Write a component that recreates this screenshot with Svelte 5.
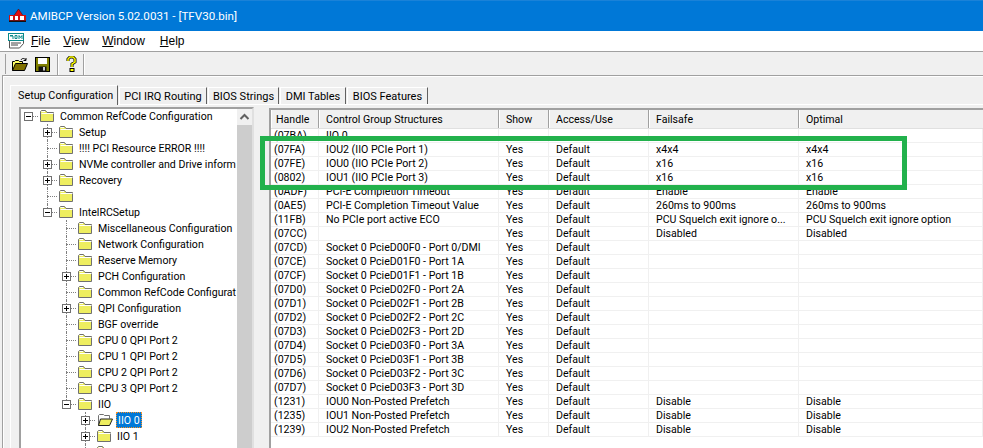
<script>
    const tabs = [
        { name: "Setup Configuration", w: 108 },
        { name: "PCI IRQ Routing", w: 88 },
        { name: "BIOS Strings", w: 71 },
        { name: "DMI Tables", w: 66 },
        { name: "BIOS Features", w: 81 }
    ];

    // l = level, x = expander, last = last child so the line stops half way
    const tree = [
        { l: 0, t: "Common RefCode Configuration", x: "-" },
        { l: 1, t: "Setup", x: "+" },
        { l: 1, t: "!!!! PCI Resource ERROR !!!!" },
        { l: 1, t: "NVMe controller and Drive inform", x: "+" },
        { l: 1, t: "Recovery", x: "+" },
        { l: 1, t: "" },
        { l: 1, t: "IntelRCSetup", x: "-", last: true },
        { l: 2, t: "Miscellaneous Configuration" },
        { l: 2, t: "Network Configuration" },
        { l: 2, t: "Reserve Memory" },
        { l: 2, t: "PCH Configuration", x: "+" },
        { l: 2, t: "Common RefCode Configurat" },
        { l: 2, t: "QPI Configuration", x: "+" },
        { l: 2, t: "BGF override" },
        { l: 2, t: "CPU 0 QPI Port 2" },
        { l: 2, t: "CPU 1 QPI Port 2" },
        { l: 2, t: "CPU 2 QPI Port 2" },
        { l: 2, t: "CPU 3 QPI Port 2" },
        { l: 2, t: "IIO", x: "-", last: true },
        { l: 3, t: "IIO 0", x: "+", open: true },
        { l: 3, t: "IIO 1", x: "+" },
        { l: 3, t: "IIO 2", x: "+" }
    ];

    const columns = ["Handle", "Control Group Structures", "Show", "Access/Use", "Failsafe", "Optimal"];

    const rows = [
        ["(07BA)", "IIO 0", "", "", "", ""],
        ["(07FA)", "IOU2 (IIO PCIe Port 1)", "Yes", "Default", "x4x4", "x4x4"],
        ["(07FE)", "IOU0 (IIO PCIe Port 2)", "Yes", "Default", "x16", "x16"],
        ["(0802)", "IOU1 (IIO PCIe Port 3)", "Yes", "Default", "x16", "x16"],
        ["(0ADF)", "PCI-E Completion Timeout", "Yes", "Default", "Enable", "Enable"],
        ["(0AE5)", "PCI-E Completion Timeout Value", "Yes", "Default", "260ms to 900ms", "260ms to 900ms"],
        ["(11FB)", "No PCIe port active ECO", "Yes", "Default", "PCU Squelch exit ignore o...", "PCU Squelch exit ignore option"],
        ["(07CC)", "", "Yes", "Default", "Disabled", "Disabled"],
        ["(07CD)", "Socket 0 PcieD00F0 - Port 0/DMI", "Yes", "Default", "", ""],
        ["(07CE)", "Socket 0 PcieD01F0 - Port 1A", "Yes", "Default", "", ""],
        ["(07CF)", "Socket 0 PcieD01F1 - Port 1B", "Yes", "Default", "", ""],
        ["(07D0)", "Socket 0 PcieD02F0 - Port 2A", "Yes", "Default", "", ""],
        ["(07D1)", "Socket 0 PcieD02F1 - Port 2B", "Yes", "Default", "", ""],
        ["(07D2)", "Socket 0 PcieD02F2 - Port 2C", "Yes", "Default", "", ""],
        ["(07D3)", "Socket 0 PcieD02F3 - Port 2D", "Yes", "Default", "", ""],
        ["(07D4)", "Socket 0 PcieD03F0 - Port 3A", "Yes", "Default", "", ""],
        ["(07D5)", "Socket 0 PcieD03F1 - Port 3B", "Yes", "Default", "", ""],
        ["(07D6)", "Socket 0 PcieD03F2 - Port 3C", "Yes", "Default", "", ""],
        ["(07D7)", "Socket 0 PcieD03F3 - Port 3D", "Yes", "Default", "", ""],
        ["(1231)", "IOU0 Non-Posted Prefetch", "Yes", "Default", "Disable", "Disable"],
        ["(1235)", "IOU1 Non-Posted Prefetch", "Yes", "Default", "Disable", "Disable"],
        ["(1239)", "IOU2 Non-Posted Prefetch", "Yes", "Default", "Disable", "Disable"]
    ];
</script>

<div class="window">
    <header class="title">
        <svg width="17" height="14" viewBox="0 0 17 14">
            <path d="M9.500 0 L15 8 L4 8 Z" fill="#e01010" stroke="#400" stroke-width="0.500" />
            <rect x="0" y="6" width="17" height="6" fill="#d01010" />
            <path d="M1 7h3v4H1zM6 7h3v4H6zM11 7h4v4h-4z" fill="#fff" />
            <rect x="0" y="11.500" width="17" height="1.500" fill="#111" />
        </svg>
        <span>AMIBCP Version 5.02.0031 - [TFV30.bin]</span>
    </header>

    <nav class="menu">
        <svg class="rom" width="17" height="16" viewBox="0 0 17 16">
            <path d="M1.500 6.500h14v4l-4 4.500h-10z" fill="#fff" stroke="#555" />
            <rect x="0.500" y="0.500" width="15" height="7" fill="#fff" stroke="#0a8a8a" />
            <path d="M2 3h3v3M2 2.500h3M7 2.500h2v3H7zM11 6V2.500l1.500 2 1.500-2V6" fill="none" stroke="#0a8a8a" />
            <path d="M3 10h10M3 12h7" stroke="#444" />
        </svg>
        <span><u>F</u>ile</span>
        <span><u>V</u>iew</span>
        <span class="wide"><u>W</u>indow</span>
        <span><u>H</u>elp</span>
    </nav>

    <div class="toolbar">
        <div class="tools">
            <svg width="16" height="15" viewBox="0 0 16 15">
                <path d="M0.500 13.500v-9h2l1-1h3l1 1h3v2" fill="#ffff66" stroke="#000" />
                <path d="M0.500 13.500l3-7h12l-3 7z" fill="#807000" stroke="#000" />
                <path d="M9 3c1-2 3-2 5 0M14 1v2.500h-2.500" fill="none" stroke="#000" />
            </svg>
            <svg class="disk" width="15" height="15" viewBox="0 0 15 15">
                <rect x="0.500" y="0.500" width="14" height="14" fill="#808000" stroke="#000" />
                <rect x="3" y="1" width="9" height="6" fill="#fff" />
                <rect x="3.500" y="9.500" width="8" height="5" fill="#111" />
                <rect x="8" y="10" width="2" height="3.500" fill="#ccc" />
            </svg>
            <i class="sep"></i>
            <svg class="help" width="11" height="16" viewBox="0 0 11 16">
                <path d="M2 5V3l2-2h3l2 2v3L6 8v3" fill="none" stroke="#000" stroke-width="3" />
                <path d="M2 5V3l2-2h3l2 2v3L6 8v3" fill="none" stroke="#ff0" stroke-width="1.500" />
                <rect x="4" y="12.500" width="4" height="3" fill="#ff0" stroke="#000" />
            </svg>
            <i class="sep end"></i>
        </div>
    </div>

    <main class="panel">
        <div class="tabs">
            {#each tabs as tab, i}
                <div class="tab" class:active={i == 0} style="width: {tab.w}px">{tab.name}</div>
            {/each}
        </div>

        <div class="page">
            <div class="tree">
                <div class="nodes">
                    {#each tree as node}
                        <div class="node">
                            {#each Array(node.l) as _}
                                <span class="cell"></span>
                            {/each}
                            <span class="cell branch" class:root={node.l == 0} class:last={node.last}>
                                {#if node.x}
                                    <svg class="exp" width="9" height="9" viewBox="0 0 9 9">
                                        <rect x="0.500" y="0.500" width="8" height="8" fill="#fff" stroke="#707070" />
                                        <path d={node.x == "+" ? "M2 4.500h5M4.500 2v5" : "M2 4.500h5"} stroke="#000" />
                                    </svg>
                                {/if}
                            </span>
                            {#if node.open}
                                <svg class="folder" width="16" height="12" viewBox="0 0 16 12">
                                    <path d="M1.500 11.500V1.500l1-1h4l1 1h5v3" fill="#fff" stroke="#707070" />
                                    <path d="M1.500 11.500l2-6.500h12l-3 6.500z" fill="#eeee60" stroke="#222" />
                                </svg>
                            {:else}
                                <svg class="folder" width="15" height="12" viewBox="0 0 15 12">
                                    <path d="M0.500 11.500V1.500l1-1h4l1.500 2h6.500v9z" fill="#eeee60" stroke="#707070" />
                                    <path d="M1.500 1.500h3.500M1.500 3.500h12" stroke="#fff" />
                                </svg>
                            {/if}
                            {#if node.t}
                                <span class="label" class:selected={node.open}>{node.t}</span>
                            {/if}
                        </div>
                    {/each}
                </div>
                <div class="scroll">
                    <svg class="up" width="15" height="16" viewBox="0 0 15 16">
                        <path d="M3.500 10l4-4 4 4" fill="none" stroke="#606060" stroke-width="2" />
                    </svg>
                    <div class="thumb"></div>
                </div>
            </div>

            <div class="list">
                <div class="row head">
                    {#each columns as col}
                        <div class="col">{col}</div>
                    {/each}
                </div>
                {#each rows as row}
                    <div class="row">
                        {#each row as val}
                            <div class="col">{val}</div>
                        {/each}
                    </div>
                {/each}
            </div>
        </div>
    </main>

    <div class="mark"></div>
</div>

<style>
    :global(body) {
        margin: 0;
        background: #f0f0f0;
    }
    .window {
        position: relative;
        width: 983px;
        height: 448px;
        overflow: hidden;
        font-family: Roboto, sans-serif;
        font-size: 10.6px;
        color: #000;
    }
    .title {
        height: 31px;
        box-sizing: border-box;
        background: #0078d7;
        border-top: 1px solid #1a82d8;
        display: flex;
        align-items: center;
        padding-left: 9px;
        gap: 4px;
        color: #fff;
        font-size: 11.6px;
    }
    .menu {
        height: 20px;
        background: #fff;
        display: flex;
        align-items: center;
        padding-left: 8px;
        font-family: "Liberation Sans", sans-serif;
        font-size: 12px;
    }
    .menu span {
        margin-right: 13px;
    }
    .menu .wide {
        margin-right: 15px;
    }
    .rom {
        margin-right: 6px;
    }
    .toolbar {
        height: 24px;
        box-sizing: border-box;
        border-top: 1px solid #a0a0a0;
        padding: 2px 0 0 5px;
    }
    .tools {
        display: flex;
        align-items: center;
        height: 20px;
        border-left: 1px solid #a0a0a0;
        padding-left: 6px;
    }
    .disk {
        margin: 0 7px 0 7px;
    }
    .help {
        margin: 0 6px 0 7px;
    }
    .sep {
        width: 1px;
        height: 21px;
        background: #a0a0a0;
        border-right: 1px solid #fff;
    }
    .panel {
        box-sizing: border-box;
        height: 373px;
        border-top: 1px solid #a0a0a0;
        border-left: 1px solid #a0a0a0;
        margin-left: 2px;
        padding: 8px 0 0 7px;
        box-shadow: inset 1px 1px 0 #fff;
    }
    .tabs {
        display: flex;
        height: 20px;
        align-items: flex-end;
        gap: 1px;
    }
    .tab {
        height: 17px;
        box-sizing: border-box;
        padding-top: 1px;
        border: 1px solid #fff;
        border-right-color: #606060;
        border-bottom: 0;
        line-height: 15px;
        font-size: 11px;
        text-align: center;
        white-space: nowrap;
    }
    .tab.active {
        height: 20px;
        padding: 2px 0 0 7px;
        font-size: 10.8px;
        text-align: left;
        background: #f0f0f0;
        margin-bottom: -1px;
        position: relative;
        z-index: 1;
    }
    .page {
        border-top: 1px solid #fff;
        border-left: 1px solid #fff;
        height: 344px;
        display: flex;
        padding: 2px 0 0 8px;
        gap: 15px;
    }
    .tree {
        width: 235px;
        box-sizing: border-box;
        height: 346px;
        background: #fff;
        border: 2px solid #a0a0a0;
        border-right-color: #e0e0e0;
        border-bottom: 0;
        display: flex;
        overflow: hidden;
    }
    .nodes {
        flex: 1;
        min-width: 0;
        margin: -1px 0 0 -2px;
        overflow: hidden;
    }
    .node {
        display: flex;
        align-items: center;
        height: 16px;
        white-space: nowrap;
    }
    .cell {
        flex: none;
        position: relative;
        width: 19px;
        height: 16px;
    }
    .branch::before {
        content: "";
        position: absolute;
        left: 9px;
        top: 0;
        bottom: 0;
        border-left: 1px dotted #808080;
    }
    .branch.root::before {
        display: none;
    }
    .branch.last::before {
        bottom: 8px;
    }
    .branch::after {
        content: "";
        position: absolute;
        left: 9px;
        right: 0;
        top: 8px;
        border-top: 1px dotted #808080;
    }
    .exp {
        position: absolute;
        z-index: 1;
        left: 5px;
        top: 4px;
    }
    .folder {
        flex: none;
        margin: 0 4px 0 2px;
    }
    .label {
        height: 16px;
        padding: 0 2px;
        margin-left: -1px;
        line-height: 18px;
    }
    .label.selected {
        background: #0078d7;
        color: #fff;
        outline: 1px dotted #ff9020;
        outline-offset: -1px;
    }
    .scroll {
        flex: none;
        width: 15px;
        display: flex;
        flex-direction: column;
        background: #f0f0f0;
    }
    .up {
        display: block;
        flex: none;
    }
    .thumb {
        flex: 1;
        background: #cdcdcd;
    }
    .list {
        flex: 1;
        background: #fff;
        border-top: 2px solid #a0a0a0;
        border-left: 2px solid #a0a0a0;
        height: 338px;
        margin-top: 1px;
    }
    .row {
        display: grid;
        grid-template-columns: 48px 180px 50px 100px 150px 1fr;
        height: 14px;
        border-bottom: 1px solid #f0f0f0;
        box-sizing: border-box;
        line-height: 14px;
    }
    .row.head {
        height: 19px;
        line-height: 20px;
        background: #f0f0f0;
        border-bottom: 1px solid #e0e0e0;
    }
    .col {
        padding-left: 7px;
        border-right: 1px solid #f0f0f0;
        white-space: nowrap;
        overflow: hidden;
    }
    .col:first-child {
        padding-left: 3px;
    }
    .head .col {
        border-right: 1px solid #a0a0a0;
        box-shadow: inset 1px 0 0 #fff;
    }
    .head .col:first-child {
        padding-left: 5px;
    }
    .head .col:last-child {
        border-right: 0;
    }
    .mark {
        position: absolute;
        left: 260px;
        top: 136px;
        width: 647px;
        height: 54px;
        box-sizing: border-box;
        border: 5px solid #22b14c;
    }
</style>
